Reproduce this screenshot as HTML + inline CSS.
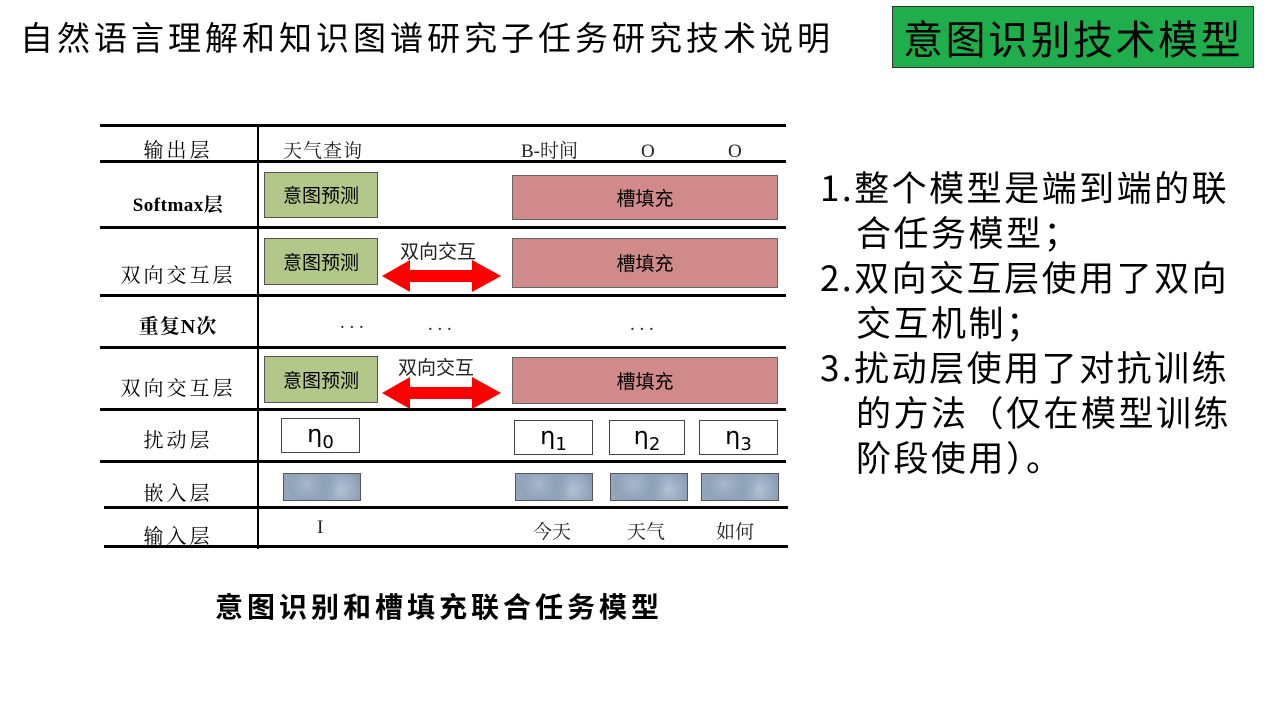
<!DOCTYPE html>
<html><head><meta charset="utf-8"><style>
body{margin:0;width:1280px;height:720px;background:#fff;position:relative;overflow:hidden;font-family:"Liberation Sans","Noto Sans CJK SC",sans-serif;}
.a{position:absolute;white-space:nowrap}
.h{position:absolute;height:3px;background:#000}
.v{position:absolute;width:2px;background:#000}
.lbl{position:absolute;font-family:"Liberation Serif","Noto Serif CJK SC",serif;font-size:20px;width:156px;text-align:center;left:100px;letter-spacing:3px}
.g{position:absolute;background:#b3c78a;border:1px solid #555;font-size:19px;text-align:center;font-family:"Noto Sans CJK SC",sans-serif}
.r{position:absolute;background:#d08a8a;border:1px solid #666;font-size:19px;text-align:center;font-family:"Noto Sans CJK SC",sans-serif}
.eta{position:absolute;border:1px solid #444;background:#fff;font-size:24px;text-align:center;font-family:"DejaVu Sans",sans-serif;line-height:30px}
.eta sub{font-size:18px}
.emb{position:absolute;width:76px;height:26px;border:1px solid #555;background:radial-gradient(circle at 30% 40%,#a7b7cb 0,#8fa2b9 30%,transparent 60%),radial-gradient(circle at 75% 60%,#b3c2d3 0,#8599b2 40%,#9aacc2 70%)}
.s{position:absolute;font-family:"Liberation Serif","Noto Serif CJK SC",serif;font-size:19px;color:#222}
.rt{position:absolute;left:820px;font-size:35px;line-height:45px;font-family:"Noto Sans CJK SC",sans-serif;letter-spacing:2.5px;white-space:nowrap}
.rt div.i{padding-left:36px}
</style></head><body>
<div class="a" style="left:20px;top:14px;font-size:33px;font-family:'Noto Sans CJK SC',sans-serif;line-height:44px;letter-spacing:4px">自然语言理解和知识图谱研究子任务研究技术说明</div>
<div class="a" style="left:892px;top:6px;width:360px;height:60px;background:#1fae4b;border:1px solid #333;font-size:40px;line-height:60px;text-align:center;font-family:'Noto Sans CJK SC',sans-serif;letter-spacing:2.5px">意图识别技术模型</div>

<div class="h" style="left:100px;width:686px;top:124px"></div>
<div class="h" style="left:100px;width:686px;top:160px"></div>
<div class="h" style="left:100px;width:686px;top:226px"></div>
<div class="h" style="left:100px;width:686px;top:294px"></div>
<div class="h" style="left:100px;width:686px;top:346px"></div>
<div class="h" style="left:100px;width:686px;top:408px"></div>
<div class="h" style="left:100px;width:686px;top:460px"></div>
<div class="h" style="left:104px;width:684px;top:506px"></div>
<div class="h" style="left:104px;width:684px;top:545px"></div>
<div class="v" style="left:257px;top:125px;height:424px"></div>

<div class="lbl" style="top:134px">输出层</div>
<div class="lbl" style="top:190px;font-weight:bold;font-size:19px;letter-spacing:0.5px">Softmax层</div>
<div class="lbl" style="top:259px">双向交互层</div>
<div class="lbl" style="top:310px;font-weight:bold;letter-spacing:1px">重复N次</div>
<div class="lbl" style="top:372px">双向交互层</div>
<div class="lbl" style="top:424px">扰动层</div>
<div class="lbl" style="top:477px">嵌入层</div>
<div class="lbl" style="top:520px">输入层</div>

<div class="s" style="left:283px;top:136px;letter-spacing:1px">天气查询</div>
<div class="s" style="left:521px;top:136px">B-时间</div>
<div class="s" style="left:641px;top:141px">O</div>
<div class="s" style="left:728px;top:141px">O</div>

<div class="g" style="left:264px;top:172px;width:112px;height:44px;line-height:44px">意图预测</div>
<div class="r" style="left:512px;top:175px;width:264px;height:43px;line-height:43px">槽填充</div>
<div class="g" style="left:264px;top:238px;width:112px;height:45px;line-height:45px">意图预测</div>
<div class="r" style="left:512px;top:238px;width:264px;height:48px;line-height:48px">槽填充</div>
<div class="g" style="left:264px;top:356px;width:112px;height:45px;line-height:45px">意图预测</div>
<div class="r" style="left:512px;top:357px;width:264px;height:45px;line-height:45px">槽填充</div>

<div class="s" style="left:400px;top:237px;font-family:'Noto Sans CJK SC',sans-serif;font-size:19px">双向交互</div>
<div class="s" style="left:398px;top:353px;font-family:'Noto Sans CJK SC',sans-serif;font-size:19px">双向交互</div>
<svg class="a" style="left:380px;top:258px" width="124" height="36"><polygon points="2,18 30,2 30,12 92,12 92,2 121,18 92,34 92,24 30,24 30,34" fill="#f00"/></svg>
<svg class="a" style="left:380px;top:375px" width="124" height="36"><polygon points="2,18 30,2 30,12 92,12 92,2 121,18 92,34 92,24 30,24 30,34" fill="#f00"/></svg>

<div class="s" style="left:340px;top:312px">. . .</div>
<div class="s" style="left:428px;top:314px">. . .</div>
<div class="s" style="left:630px;top:314px">. . .</div>

<div class="eta" style="left:281px;top:418px;width:77px;height:33px">η<sub>0</sub></div>
<div class="eta" style="left:514px;top:420px;width:77px;height:33px">η<sub>1</sub></div>
<div class="eta" style="left:609px;top:420px;width:74px;height:33px">η<sub>2</sub></div>
<div class="eta" style="left:699px;top:420px;width:77px;height:33px">η<sub>3</sub></div>

<div class="emb" style="left:283px;top:473px"></div>
<div class="emb" style="left:515px;top:473px"></div>
<div class="emb" style="left:610px;top:473px"></div>
<div class="emb" style="left:701px;top:473px"></div>

<div class="s" style="left:317px;top:517px">I</div>
<div class="s" style="left:533px;top:517px">今天</div>
<div class="s" style="left:627px;top:517px">天气</div>
<div class="s" style="left:716px;top:517px">如何</div>

<div class="a" style="left:215px;top:588px;font-size:28px;font-weight:bold;font-family:'Noto Sans CJK SC',sans-serif;letter-spacing:4px;line-height:36px">意图识别和槽填充联合任务模型</div>

<div class="rt" style="top:164px"><div>1.整个模型是端到端的联</div><div class="i">合任务模型；</div><div>2.双向交互层使用了双向</div><div class="i">交互机制；</div><div>3.扰动层使用了对抗训练</div><div class="i">的方法（仅在模型训练</div><div class="i">阶段使用）。</div></div>
</body></html>
